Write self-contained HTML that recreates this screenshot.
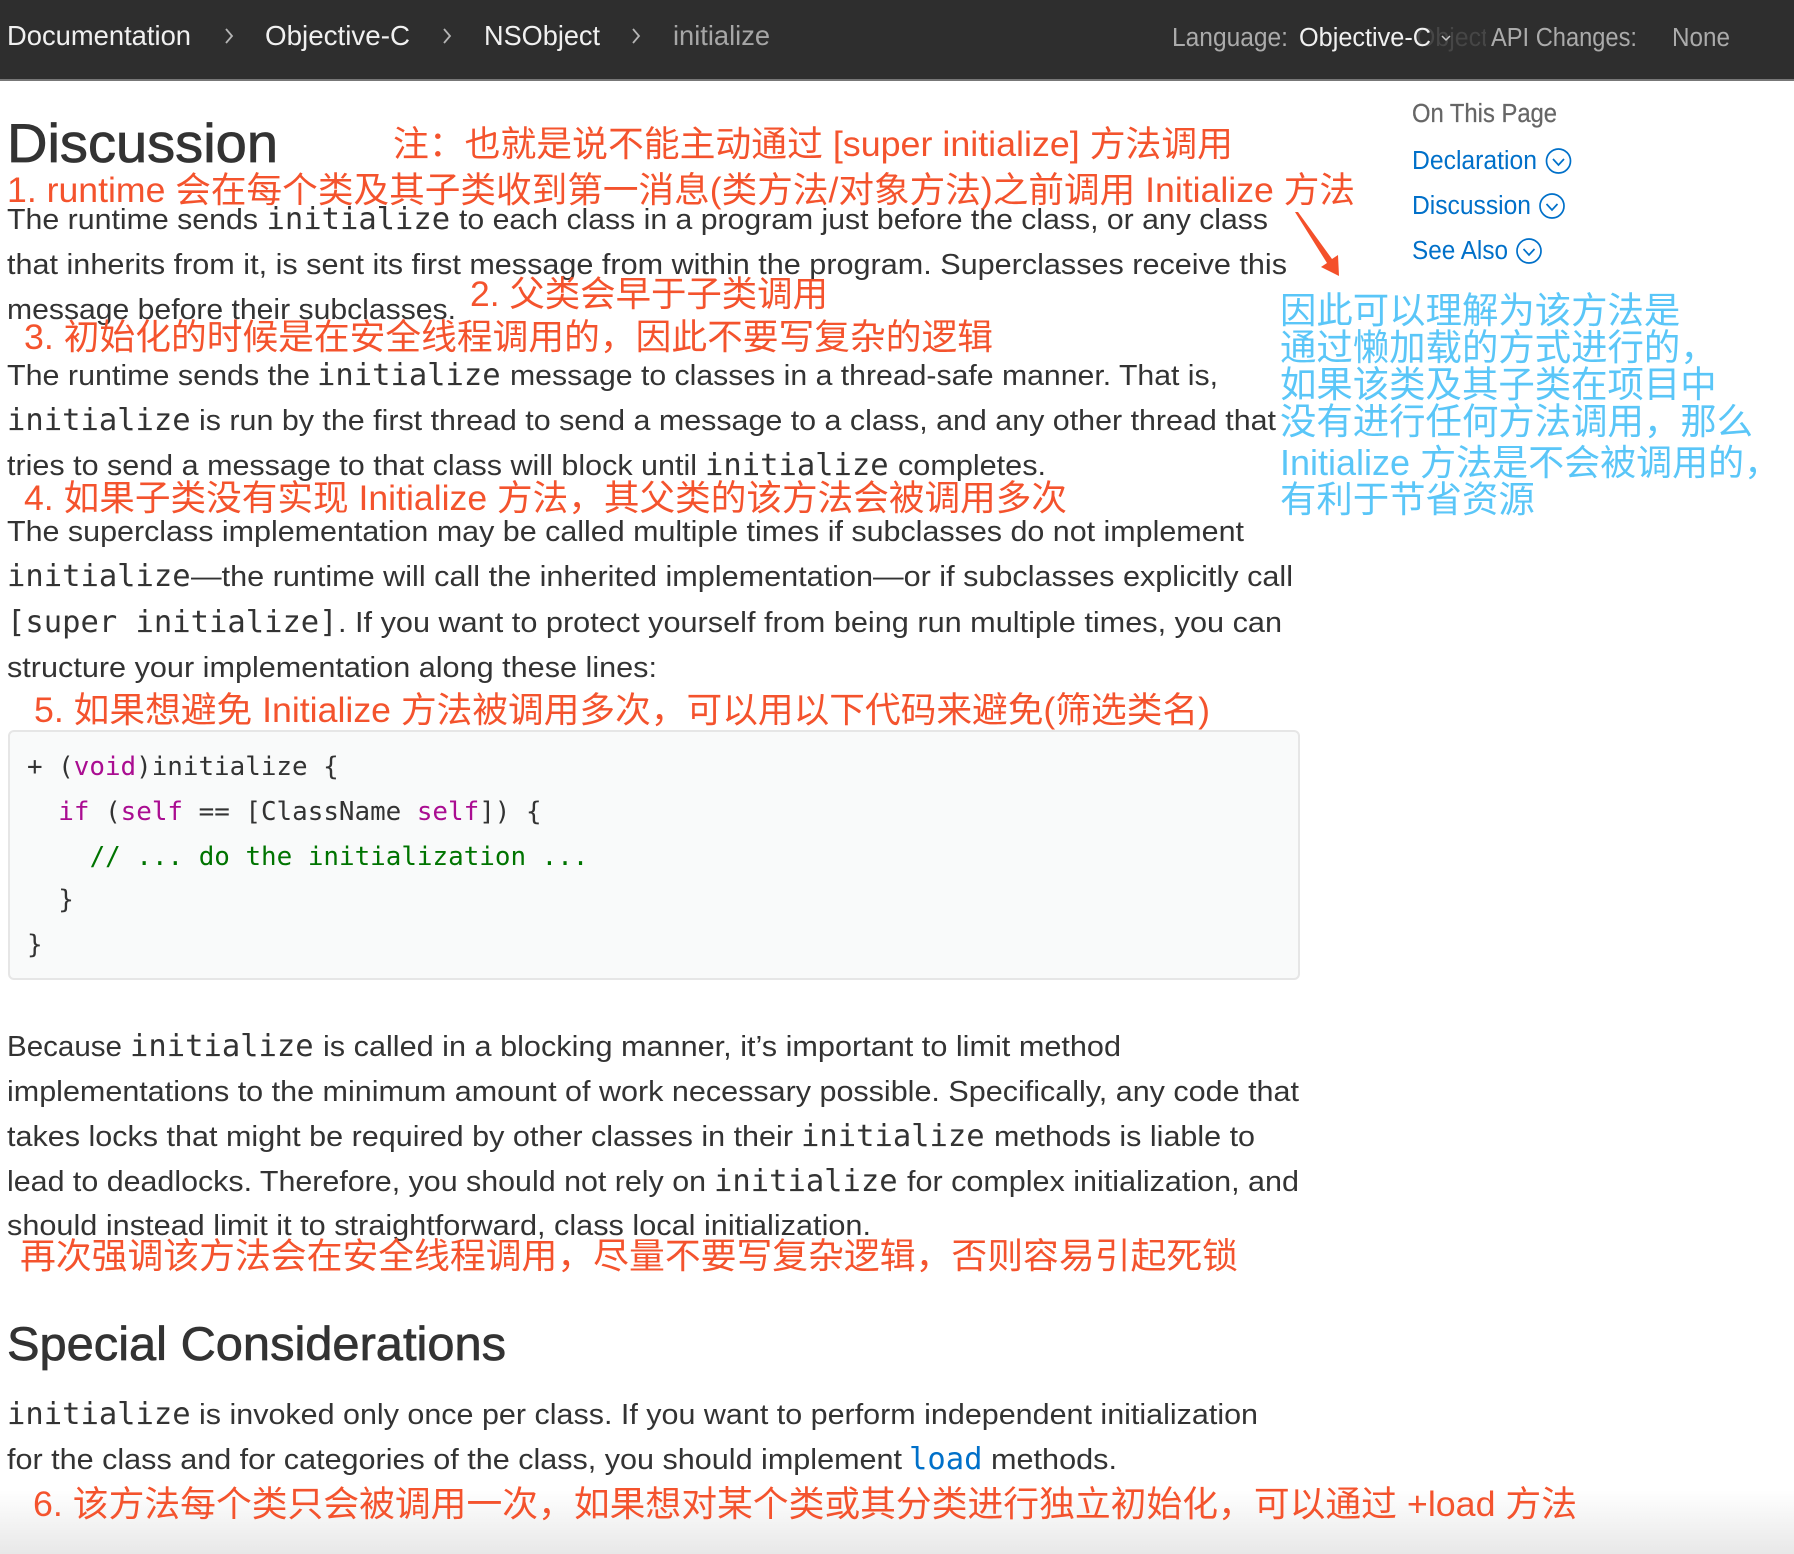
<!DOCTYPE html>
<html lang="zh">
<head>
<meta charset="utf-8">
<title>initialize</title>
<style>
html,body{margin:0;padding:0;background:#fff;width:1794px;height:1554px;overflow:hidden}
svg{display:block;position:absolute;left:0;top:0}
text{white-space:pre}
.b{font:28.5px "Liberation Sans",sans-serif;fill:#333}
.m{font:30.5px "DejaVu Sans Mono","Liberation Mono",monospace;fill:#333}
.c{font:25.9px "DejaVu Sans Mono","Liberation Mono",monospace;fill:#333}
.n{font:27.5px "Liberation Sans",sans-serif;fill:#f0f0f0}
.g{font:25.5px "Liberation Sans",sans-serif;fill:#ababab}
.s{font:25.5px "Liberation Sans",sans-serif;fill:#0070c9}
.r{font:35.5px "Liberation Sans","Noto Sans CJK SC",sans-serif;fill:#f4532d}
.u{font:36.4px "Liberation Sans","Noto Sans CJK SC",sans-serif;fill:#5ac6f8}
.kw{fill:#aa0d91}
.cm{fill:#007400}
</style>
</head>
<body>
<svg width="1794" height="1554" viewBox="0 0 1794 1554" xmlns="http://www.w3.org/2000/svg">
<defs>
<linearGradient id="fade" x1="0" y1="0" x2="0" y2="1"><stop offset="0" stop-color="#fff"/><stop offset="1" stop-color="#e8e8e8"/></linearGradient>
</defs>
<rect x="0" y="1490" width="1794" height="64" fill="url(#fade)"/>

<!-- nav -->
<rect x="0" y="0" width="1794" height="79" fill="#2e2e2e"/>
<rect x="0" y="79" width="1794" height="2" fill="#777"/>
<text class="n" x="7" y="45" textLength="184" lengthAdjust="spacingAndGlyphs">Documentation</text>
<polyline points="226,29 232,36 226,43" fill="none" stroke="#b5b5b5" stroke-width="1.8"/>
<text class="n" x="265" y="45" textLength="145" lengthAdjust="spacingAndGlyphs">Objective-C</text>
<polyline points="444,29 450,36 444,43" fill="none" stroke="#b5b5b5" stroke-width="1.8"/>
<text class="n" x="484" y="45" textLength="116" lengthAdjust="spacingAndGlyphs">NSObject</text>
<polyline points="633,29 639,36 633,43" fill="none" stroke="#b5b5b5" stroke-width="1.8"/>
<text class="n" x="673" y="45" textLength="97" lengthAdjust="spacingAndGlyphs" style="fill:#a6a6a6">initialize</text>
<text class="g" x="1416" y="46" style="fill:#464646" textLength="130" lengthAdjust="spacingAndGlyphs">Objective-C</text>
<text class="g" x="1172" y="46" textLength="116" lengthAdjust="spacingAndGlyphs">Language:</text>
<text class="g" x="1299" y="46" textLength="132" lengthAdjust="spacingAndGlyphs" style="fill:#f0f0f0">Objective-C</text>
<polyline points="1442,36 1446,40 1450,36" fill="none" stroke="#c8c8c8" stroke-width="1.5"/>
<rect x="1486" y="20" width="150" height="36" fill="#2e2e2e"/>
<text class="g" x="1491" y="46" textLength="146" lengthAdjust="spacingAndGlyphs">API Changes:</text>
<text class="g" x="1672" y="46" textLength="58" lengthAdjust="spacingAndGlyphs">None</text>

<!-- sidebar -->
<text class="s" x="1412" y="122" textLength="145" lengthAdjust="spacingAndGlyphs" style="fill:#666;stroke:#666;stroke-width:.25">On This Page</text>
<text class="s" x="1412" y="169" textLength="125" lengthAdjust="spacingAndGlyphs">Declaration</text>
<circle cx="1558.5" cy="161" r="12" fill="none" stroke="#0070c9" stroke-width="1.7"/>
<polyline points="1553,159 1558.5,165 1564,159" fill="none" stroke="#0070c9" stroke-width="1.7"/>
<text class="s" x="1412" y="214" textLength="119" lengthAdjust="spacingAndGlyphs">Discussion</text>
<circle cx="1552" cy="206" r="12" fill="none" stroke="#0070c9" stroke-width="1.7"/>
<polyline points="1546.5,204 1552,210 1557.5,204" fill="none" stroke="#0070c9" stroke-width="1.7"/>
<text class="s" x="1412" y="259" textLength="96" lengthAdjust="spacingAndGlyphs">See Also</text>
<circle cx="1529" cy="251" r="12" fill="none" stroke="#0070c9" stroke-width="1.7"/>
<polyline points="1523.5,249 1529,255 1534.5,249" fill="none" stroke="#0070c9" stroke-width="1.7"/>

<!-- headings -->
<text x="7" y="162" textLength="271" lengthAdjust="spacingAndGlyphs" style="font:55px 'Liberation Sans',sans-serif;fill:#333;stroke:#333;stroke-width:.8">Discussion</text>
<text x="7" y="1360" textLength="499" lengthAdjust="spacingAndGlyphs" style="font:47px 'Liberation Sans',sans-serif;fill:#333;stroke:#333;stroke-width:.7">Special Considerations</text>

<!-- body -->
<text class="b" x="7" y="229" textLength="251" lengthAdjust="spacingAndGlyphs">The runtime sends</text>
<text class="m" x="266.5" y="229">initialize</text>
<text class="b" x="459" y="229" textLength="809" lengthAdjust="spacingAndGlyphs">to each class in a program just before the class, or any class</text>
<text class="b" x="7" y="274" textLength="1280" lengthAdjust="spacingAndGlyphs">that inherits from it, is sent its first message from within the program. Superclasses receive this</text>
<text class="b" x="7" y="319" textLength="449" lengthAdjust="spacingAndGlyphs">message before their subclasses.</text>

<text class="b" x="7" y="385" textLength="303" lengthAdjust="spacingAndGlyphs">The runtime sends the</text>
<text class="m" x="317" y="385">initialize</text>
<text class="b" x="510" y="385" textLength="708" lengthAdjust="spacingAndGlyphs">message to classes in a thread-safe manner. That is,</text>
<text class="m" x="7" y="430">initialize</text>
<text class="b" x="199" y="430" textLength="1077" lengthAdjust="spacingAndGlyphs">is run by the first thread to send a message to a class, and any other thread that</text>
<text class="b" x="7" y="475" textLength="690" lengthAdjust="spacingAndGlyphs">tries to send a message to that class will block until</text>
<text class="m" x="705" y="475">initialize</text>
<text class="b" x="898" y="475" textLength="148" lengthAdjust="spacingAndGlyphs">completes.</text>

<text class="b" x="7" y="541" textLength="1237" lengthAdjust="spacingAndGlyphs">The superclass implementation may be called multiple times if subclasses do not implement</text>
<text class="m" x="7" y="586">initialize</text>
<text class="b" x="191" y="586" textLength="1102" lengthAdjust="spacingAndGlyphs">—the runtime will call the inherited implementation—or if subclasses explicitly call</text>
<text class="m" x="7" y="632">[super initialize]</text>
<text class="b" x="338" y="632" textLength="944" lengthAdjust="spacingAndGlyphs">. If you want to protect yourself from being run multiple times, you can</text>
<text class="b" x="7" y="677" textLength="650" lengthAdjust="spacingAndGlyphs">structure your implementation along these lines:</text>

<!-- code -->
<rect x="9" y="731" width="1290" height="248" rx="5" fill="#f9fafa" stroke="#e6e6e6" stroke-width="2"/>
<text class="c" x="27" y="775">+ (<tspan class="kw">void</tspan>)initialize {</text>
<text class="c" x="58.3" y="820"><tspan class="kw">if</tspan> (<tspan class="kw">self</tspan> == [ClassName <tspan class="kw">self</tspan>]) {</text>
<text class="c" x="89.6" y="865"><tspan class="cm">// ... do the initialization ...</tspan></text>
<text class="c" x="58.3" y="908">}</text>
<text class="c" x="27" y="953">}</text>

<text class="b" x="7" y="1056" textLength="115" lengthAdjust="spacingAndGlyphs">Because</text>
<text class="m" x="130" y="1056">initialize</text>
<text class="b" x="323" y="1056" textLength="798" lengthAdjust="spacingAndGlyphs">is called in a blocking manner, it’s important to limit method</text>
<text class="b" x="7" y="1101" textLength="1292" lengthAdjust="spacingAndGlyphs">implementations to the minimum amount of work necessary possible. Specifically, any code that</text>
<text class="b" x="7" y="1146" textLength="786" lengthAdjust="spacingAndGlyphs">takes locks that might be required by other classes in their</text>
<text class="m" x="801" y="1146">initialize</text>
<text class="b" x="994" y="1146" textLength="261" lengthAdjust="spacingAndGlyphs">methods is liable to</text>
<text class="b" x="7" y="1191" textLength="699" lengthAdjust="spacingAndGlyphs">lead to deadlocks. Therefore, you should not rely on</text>
<text class="m" x="714" y="1191">initialize</text>
<text class="b" x="907" y="1191" textLength="392" lengthAdjust="spacingAndGlyphs">for complex initialization, and</text>
<text class="b" x="7" y="1235" textLength="864" lengthAdjust="spacingAndGlyphs">should instead limit it to straightforward, class local initialization.</text>

<text class="m" x="7" y="1424">initialize</text>
<text class="b" x="199" y="1424" textLength="1059" lengthAdjust="spacingAndGlyphs">is invoked only once per class. If you want to perform independent initialization</text>
<text class="b" x="7" y="1469" textLength="895" lengthAdjust="spacingAndGlyphs">for the class and for categories of the class, you should implement</text>
<text class="m" x="909" y="1469" style="fill:#0070c9">load</text>
<text class="b" x="991" y="1469" textLength="126" lengthAdjust="spacingAndGlyphs">methods.</text>

<!-- red notes -->
<text class="r" x="393" y="156" textLength="840" lengthAdjust="spacingAndGlyphs">注：也就是说不能主动通过 [super initialize] 方法调用</text>
<text class="r" x="7" y="202" textLength="1348" lengthAdjust="spacingAndGlyphs">1. runtime 会在每个类及其子类收到第一消息(类方法/对象方法)之前调用 Initialize 方法</text>
<text class="r" x="470" y="306" textLength="358" lengthAdjust="spacingAndGlyphs">2. 父类会早于子类调用</text>
<text class="r" x="24" y="349" textLength="969" lengthAdjust="spacingAndGlyphs">3. 初始化的时候是在安全线程调用的，因此不要写复杂的逻辑</text>
<text class="r" x="24" y="510" textLength="1043" lengthAdjust="spacingAndGlyphs">4. 如果子类没有实现 Initialize 方法，其父类的该方法会被调用多次</text>
<text class="r" x="34" y="722" textLength="1176" lengthAdjust="spacingAndGlyphs">5. 如果想避免 Initialize 方法被调用多次，可以用以下代码来避免(筛选类名)</text>
<text class="r" x="20" y="1268" textLength="1218" lengthAdjust="spacingAndGlyphs">再次强调该方法会在安全线程调用，尽量不要写复杂逻辑，否则容易引起死锁</text>
<text class="r" x="33" y="1516" textLength="1544" lengthAdjust="spacingAndGlyphs">6. 该方法每个类只会被调用一次，如果想对某个类或其分类进行独立初始化，可以通过 +load 方法</text>

<!-- arrow -->
<polygon points="1295,212 1298,212 1332,259 1338,255 1339,276 1321,267 1327,263" fill="#f4502a"/>

<!-- blue notes -->
<text class="u" x="1280" y="323">因此可以理解为该方法是</text>
<text class="u" x="1280" y="360">通过懒加载的方式进行的，</text>
<text class="u" x="1280" y="397">如果该类及其子类在项目中</text>
<text class="u" x="1280" y="434">没有进行任何方法调用，那么</text>
<text class="u" x="1280" y="475" style="font-size:36px">Initialize 方法是不会被调用的，</text>
<text class="u" x="1280" y="512">有利于节省资源</text>
</svg>
</body>
</html>
